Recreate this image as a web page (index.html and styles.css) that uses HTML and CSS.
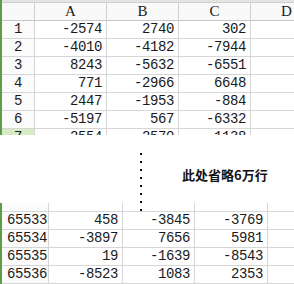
FILE: index.html
```html
<!DOCTYPE html>
<html>
<head>
<meta charset="utf-8">
<link rel="stylesheet" href="styles.css">
</head>
<body>
<div class="page">
  <div class="sheet top">
    <div class="strip"></div>
    <div class="grid grid-top">
      <div class="cell hdr corner"></div>
      <div class="cell hdr col">A</div>
      <div class="cell hdr col">B</div>
      <div class="cell hdr col">C</div>
      <div class="cell hdr col">D</div>

      <div class="cell rh">1</div><div class="cell num">-2574</div><div class="cell num">2740</div><div class="cell num">302</div><div class="cell"></div>
      <div class="cell rh">2</div><div class="cell num">-4010</div><div class="cell num">-4182</div><div class="cell num">-7944</div><div class="cell"></div>
      <div class="cell rh">3</div><div class="cell num">8243</div><div class="cell num">-5632</div><div class="cell num">-6551</div><div class="cell"></div>
      <div class="cell rh">4</div><div class="cell num">771</div><div class="cell num">-2966</div><div class="cell num">6648</div><div class="cell"></div>
      <div class="cell rh">5</div><div class="cell num">2447</div><div class="cell num">-1953</div><div class="cell num">-884</div><div class="cell"></div>
      <div class="cell rh">6</div><div class="cell num">-5197</div><div class="cell num">567</div><div class="cell num">-6332</div><div class="cell"></div>
      <div class="cell rh sel">7</div><div class="cell num">-2554</div><div class="cell num">2570</div><div class="cell num">1138</div><div class="cell"></div>
    </div>
  </div>

  <div class="gap">
    <div class="dots">
      <span></span><span></span><span></span><span></span><span></span><span></span><span></span><span></span>
    </div>
    <div class="note">此处省略6万行</div>
  </div>

  <div class="sheet bottom">
    <div class="grid grid-bottom">
      <div class="cell rh part"></div><div class="cell part"></div><div class="cell part"></div><div class="cell part"></div><div class="cell part"></div>
      <div class="cell rh">65533</div><div class="cell num">458</div><div class="cell num">-3845</div><div class="cell num">-3769</div><div class="cell"></div>
      <div class="cell rh">65534</div><div class="cell num">-3897</div><div class="cell num">7656</div><div class="cell num">5981</div><div class="cell"></div>
      <div class="cell rh">65535</div><div class="cell num">19</div><div class="cell num">-1639</div><div class="cell num">-8543</div><div class="cell"></div>
      <div class="cell rh">65536</div><div class="cell num">-8523</div><div class="cell num">1083</div><div class="cell num">2353</div><div class="cell"></div>
    </div>
  </div>
</div>
</body>
</html>
```

FILE: styles.css
```css
html, body {
  margin: 0;
  padding: 0;
  background: #ffffff;
}

.page {
  width: 294px;
  height: 284px;
  overflow: hidden;
  display: flex;
  flex-direction: column;
  font-family: "Liberation Mono", "DejaVu Sans Mono", monospace;
  font-size: 14px;
  color: #1a1a1a;
}

.sheet {
  border-left: 2px solid #5e9c45;
  overflow: hidden;
}

.top {
  height: 135px;
  flex: none;
}

.strip {
  height: 2px;
  background: #e4e4e4;
  border-bottom: 1px solid #cfcfcf;
}

.grid {
  display: grid;
  grid-auto-rows: 18px;
}

.grid-top {
  grid-template-columns: 33px 72px 72px 72px 72px;
}

.grid-bottom {
  grid-template-columns: 47px 74px 72px 73px 72px;
  grid-template-rows: 9px;
}

.cell {
  box-sizing: border-box;
  border-right: 1px solid #d6d6d6;
  border-bottom: 1px solid #d6d6d6;
  line-height: 17px;
  white-space: nowrap;
  overflow: hidden;
  letter-spacing: -0.4px;
}

.hdr {
  background: #f9f9f9;
  border-right-color: #cfcfcf;
  border-bottom-color: #c6c6c6;
}

.col {
  text-align: center;
  font-family: "Liberation Serif", "DejaVu Serif", serif;
  font-size: 15px;
  letter-spacing: 0;
}

.rh {
  text-align: center;
  background: #fbfbfb;
}

.grid-bottom .rh {
  text-align: left;
  padding-left: 5px;
}

.sel {
  background: #d5ecc4;
}

.num {
  text-align: right;
  padding-right: 4px;
}

.gap {
  flex: none;
  height: 68px;
  display: flex;
  align-items: flex-start;
  padding-left: 140px;
  box-sizing: border-box;
  position: relative;
  z-index: 1;
}

.dots {
  display: flex;
  flex-direction: column;
  gap: 6px;
  padding-top: 18px;
}

.dots span {
  display: block;
  width: 2px;
  height: 2px;
  background: #111111;
}

.note {
  margin-left: 40px;
  margin-top: 32px;
  font-family: "Noto Sans CJK SC", sans-serif;
  font-weight: 700;
  font-size: 13px;
  line-height: 16px;
  color: #111111;
}

.bottom {
  flex: 1;
}

.part {
  border-bottom-color: #d6d6d6;
}
```
